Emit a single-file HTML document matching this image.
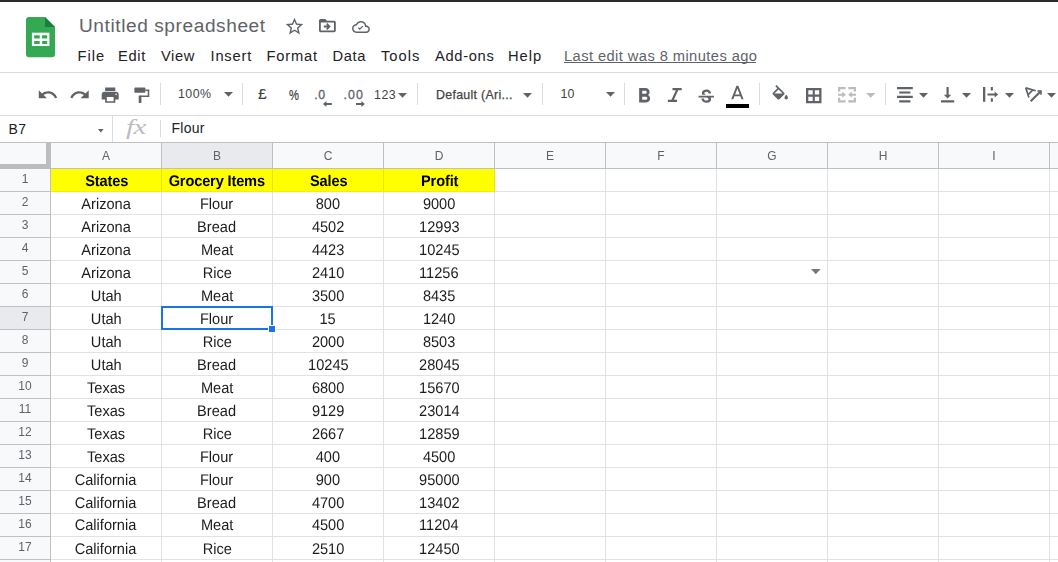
<!DOCTYPE html>
<html><head><meta charset="utf-8"><style>
*{box-sizing:border-box;margin:0;padding:0}
html,body{width:1058px;height:562px;overflow:hidden;background:#fff;font-family:"Liberation Sans",sans-serif;}
#root{position:relative;width:1058px;height:562px;overflow:hidden;background:#fff}
.abs,#root div,#root span{position:absolute}
.title{left:79px;top:15px;font-size:18px;letter-spacing:.55px;transform:scaleX(1.06);transform-origin:0 0;color:#5f6368;white-space:nowrap;line-height:22px}
.menu{top:47px;font-size:14.7px;color:#202124;white-space:nowrap;line-height:18px}
.hl{height:1px;background:#dadce0;left:0;width:1058px}
.sep{width:1px;background:#dadce0;top:83px;height:22px}
.tbt{top:87px;font-size:12.400px;color:#444;white-space:nowrap;line-height:16px}
.arr{width:0;height:0;border-left:4.700px solid transparent;border-right:4.700px solid transparent;border-top:4.800px solid #5f6368;top:92.900px}
svg{position:absolute;overflow:visible}
.ch{top:143px;height:25px;background:#f8f9fa;font-size:12px;color:#5f6368;text-align:center;line-height:26px}
.rh{left:0;width:50px;height:22px;background:#f8f9fa;font-size:12px;color:#5f6368;text-align:center;line-height:21px}
.cell{height:22px;font-size:14.6px;color:#1c1c1c;text-align:center;line-height:25px;white-space:nowrap}
.tx{position:static !important;display:inline-block;text-rendering:geometricPrecision;font-size:15.4px;transform:scaleX(0.948);transform-origin:50% 50%}
.hd{background:#ffff00;font-weight:bold;color:#000}
.hd .tx{letter-spacing:-.15px;margin-left:.5px}
.vl{width:1px;background:#e2e2e2}
.gl{height:1px;background:#e2e2e2}
</style></head><body><div id="root">
<div style="left:0;top:0;width:1058px;height:2px;background:#2a2b2e"></div>
<svg style="left:25.700px;top:16.500px" width="29" height="40" viewBox="0 0 29 40">
<path d="M3.200 0H19L29 10V37a3.200 3.200 0 0 1-3.200 3.200H3.200a3.200 3.200 0 0 1-3.200-3.200V3.200a3.200 3.200 0 0 1 3.200-3.200z" fill="#34a853"/>
<path d="M19 0L29 10H19z" fill="#188038"/>
<path d="M5.900 15.700H23.400V29H5.900z" fill="#fff"/>
<path d="M8.200 18.200H13.700V21.400H8.200zM16.100 18.200H21.200V21.400H16.100zM8.200 23.900H13.700V26.900H8.200zM16.100 23.900H21.200V26.900H16.100z" fill="#34a853"/>
</svg>
<div class="title">Untitled spreadsheet</div>
<svg style="left:283.600px;top:15.500px" width="21" height="21" viewBox="0 0 24 24"><path fill="#5f6368" d="M22 9.240l-7.190-.620L12 2 9.190 8.630 2 9.240l5.460 4.730L5.820 21 12 17.270 18.180 21l-1.630-7.030L22 9.240zM12 15.400l-3.760 2.270 1-4.280-3.320-2.880 4.380-.380L12 6.100l1.710 4.040 4.380.380-3.320 2.880 1 4.280L12 15.400z"/></svg>
<svg style="left:319px;top:19px" width="17" height="14" viewBox="0 0 17 14"><path fill="#5f6368" d="M1.600 0H6.300L8 1.700H15.200A1.600 1.600 0 0 1 16.800 3.300V11.600A1.600 1.600 0 0 1 15.200 13.200H1.600A1.600 1.600 0 0 1 0 11.600V1.600A1.600 1.600 0 0 1 1.600 0zM1.800 3.600V11.400H15V3.600z"/><path fill="#5f6368" d="M4.800 6.600H8.400L7.100 5.300 8.300 4.100 11.700 7.500 8.300 10.900 7.100 9.700 8.400 8.400H4.800z"/></svg>
<svg style="left:351.700px;top:17.700px" width="17.900" height="17.900" viewBox="0 0 24 24"><path fill="#5f6368" d="M19.350 10.040C18.670 6.590 15.640 4 12 4 9.110 4 6.600 5.640 5.350 8.040 2.340 8.360 0 10.910 0 14c0 3.310 2.690 6 6 6h13c2.760 0 5-2.240 5-5 0-2.640-2.050-4.780-4.650-4.960zM19 18H6c-2.210 0-4-1.790-4-4s1.790-4 4-4h.710C7.370 7.690 9.480 6 12 6c3.040 0 5.500 2.460 5.500 5.500v.500H19c1.660 0 3 1.340 3 3s-1.340 3-3 3z"/><path fill="#5f6368" transform="translate(11.400 13.200) scale(.78) translate(-11.250 -13.300)" d="M10 14.180l-2.090-2.090L6.500 13.500 10 17l6.010-6.010-1.410-1.410z"/></svg>
<div class="menu" style="left:77.5px;letter-spacing:1.0px">File</div>
<div class="menu" style="left:118px;letter-spacing:0.67px">Edit</div>
<div class="menu" style="left:161px;letter-spacing:0.57px">View</div>
<div class="menu" style="left:210.5px;letter-spacing:0.8px">Insert</div>
<div class="menu" style="left:266.5px;letter-spacing:0.8px">Format</div>
<div class="menu" style="left:332.5px;letter-spacing:0.67px">Data</div>
<div class="menu" style="left:381px;letter-spacing:1.0px">Tools</div>
<div class="menu" style="left:435px;letter-spacing:0.67px">Add-ons</div>
<div class="menu" style="left:508px;letter-spacing:1.0px">Help</div>
<div class="menu" style="left:564px;color:#5f6368;letter-spacing:.42px">Last edit was 8 minutes ago</div>
<div style="left:564px;top:61.500px;width:192px;height:1px;background:#5f6368"></div>
<div class="hl" style="top:72px"></div>
<svg style="left:36.8px;top:83.9px" width="21.5" height="21.5" viewBox="0 0 24 24"><path fill="#5f6368" d="M12.500 8c-2.650 0-5.050.990-6.900 2.600L2 7v9h9l-3.620-3.620c1.390-1.160 3.160-1.880 5.120-1.880 3.540 0 6.550 2.310 7.600 5.500l2.370-.780C21.080 11.030 17.150 8 12.500 8z"/></svg>
<svg style="left:68.7px;top:83.9px" width="21.5" height="21.5" viewBox="0 0 24 24"><path fill="#5f6368" d="M18.400 10.600C16.550 8.990 14.150 8 11.500 8c-4.650 0-8.580 3.030-9.960 7.220L3.900 16c1.050-3.190 4.050-5.500 7.600-5.500 1.950 0 3.730.720 5.120 1.880L13 16h9V7l-3.600 3.600z"/></svg>
<svg style="left:99.6px;top:85.2px" width="20.4" height="20.4" viewBox="0 0 24 24"><path fill="#5f6368" d="M19 8H5c-1.660 0-3 1.340-3 3v6h4v4h12v-4h4v-6c0-1.660-1.340-3-3-3zm-3 11H8v-5h8v5zm3-7c-.550 0-1-.450-1-1s.450-1 1-1 1 .450 1 1-.450 1-1 1zm-1-9H6v4h12V3z"/></svg>
<svg style="left:133.500px;top:86.500px" width="16" height="17" viewBox="0 0 16 17"><rect x=".4" y=".5" width="11" height="5.300" rx=".9" fill="#5f6368"/><path d="M11.400 3.200H14.500V9.300H6.200" fill="none" stroke="#5f6368" stroke-width="1.600"/><rect x="4.700" y="8.500" width="2.700" height="7.600" rx=".6" fill="#5f6368"/></svg>
<div class="sep" style="left:160px"></div>
<div class="tbt" style="left:178px;top:86px;letter-spacing:.45px">100%</div>
<svg style="left:223.65px;top:92.10px" width="9" height="4.7" viewBox="0 0 9 4.7"><path fill="#5f6368" d="M0 0H9L4.5 4.7z"/></svg>
<div class="sep" style="left:242px"></div>
<div class="tbt" style="left:258.300px;font-size:14.500px;top:86px;color:#3c4043;-webkit-text-stroke:.12px #3c4043;transform:scaleX(1.08);transform-origin:0 0">£</div>
<div class="tbt" style="left:289.300px;font-size:14px;top:86.500px;color:#3c4043;-webkit-text-stroke:.2px #3c4043;transform:scaleX(.8);transform-origin:0 0">%</div>
<div class="tbt" style="left:314.300px;color:#5f6368;-webkit-text-stroke:.3px #5f6368;letter-spacing:.5px">.0</div>
<div class="tbt" style="left:343.600px;color:#5f6368;-webkit-text-stroke:.3px #5f6368;letter-spacing:1px">.00</div>
<svg style="left:323.300px;top:100.700px" width="9" height="6" viewBox="0 0 9 6"><path fill="#5f6368" d="M0 3L3.400 0V2.100H8.800V3.900H3.400V6z"/></svg>
<svg style="left:355.600px;top:100.700px" width="9" height="6" viewBox="0 0 9 6"><path fill="#5f6368" d="M8.800 3L5.400 0V2.100H0V3.900H5.400V6z"/></svg>
<div class="tbt" style="left:374px;letter-spacing:.5px">123</div>
<svg style="left:397.70px;top:93.20px" width="9" height="4.7" viewBox="0 0 9 4.7"><path fill="#5f6368" d="M0 0H9L4.5 4.7z"/></svg>
<div class="sep" style="left:417px"></div>
<div class="tbt" style="left:436px;letter-spacing:.3px;-webkit-text-stroke:.25px #444">Default (Ari...</div>
<svg style="left:523.30px;top:93.20px" width="9" height="4.7" viewBox="0 0 9 4.7"><path fill="#5f6368" d="M0 0H9L4.5 4.7z"/></svg>
<div class="sep" style="left:542px"></div>
<div class="tbt" style="left:560.400px;top:86px;letter-spacing:.3px">10</div>
<svg style="left:605.75px;top:92.30px" width="9" height="4.7" viewBox="0 0 9 4.7"><path fill="#5f6368" d="M0 0H9L4.5 4.7z"/></svg>
<div class="sep" style="left:624px"></div>
<svg style="left:631.800px;top:83.800px" width="24.500" height="24.500" viewBox="0 0 24 24"><path fill="#5f6368" d="M15.600 10.790c.970-.670 1.650-1.770 1.650-2.790 0-2.260-1.750-4-4-4H7v14h7.040c2.090 0 3.710-1.700 3.710-3.790 0-1.520-.860-2.820-2.150-3.420zM10 6.500h3c.830 0 1.500.670 1.500 1.500s-.670 1.500-1.500 1.500h-3v-3zm3.500 9H10v-3h3.500c.830 0 1.500.670 1.500 1.500s-.670 1.500-1.500 1.500z"/></svg>
<svg style="left:661.100px;top:83.900px" width="27.600" height="24" viewBox="0 0 24 24" preserveAspectRatio="none"><path fill="#5f6368" d="M10 4v2.300h2.900l-3.800 9.400H6v2.300h8v-2.300h-2.800l3.800-9.400H18V4z"/></svg>
<svg style="left:695.850px;top:86.700px" width="20.500" height="20.900" viewBox="0 0 24 24" preserveAspectRatio="none"><path fill="#5f6368" d="M6.850 7.080C6.850 4.370 9.450 3 12.240 3c1.640 0 3 .490 3.900 1.280.770.650 1.460 1.730 1.460 3.240h-3.010c0-.310-.050-.590-.150-.850-.290-.860-1.200-1.280-2.250-1.280-1.860 0-2.340 1.020-2.340 1.700 0 .480.250.880.740 1.210.380.250.770.480 1.410.700H7.390c-.210-.340-.540-.890-.540-1.920zM21 12v-2H3v2h9.620c1.150.450 1.960.750 1.960 1.970 0 1-.810 1.670-2.280 1.670-1.540 0-2.930-.540-2.930-2.510H6.400c0 .550.080 1.130.240 1.580.810 2.290 3.290 3.300 5.670 3.300 2.270 0 5.300-.890 5.300-4.050 0-.300-.010-1.160-.480-1.940H21V12z"/></svg>
<svg style="left:725.700px;top:82.850px" width="22.800" height="22.800" viewBox="0 0 24 24"><path fill="#5f6368" d="M11 3L5.500 17h2.250l1.120-3h6.250l1.120 3h2.250L13 3h-2zm-1.380 9L12 5.670 14.380 12H9.620z"/></svg>
<div style="left:725.800px;top:104.100px;width:23.300px;height:3.800px;background:#000"></div>
<div class="sep" style="left:759px"></div>
<svg style="left:769.600px;top:85.300px" width="20.500" height="20.500" viewBox="0 0 24 24"><path fill="#5f6368" d="M16.560 8.940L7.620 0 6.210 1.410l2.380 2.380-5.150 5.150c-.590.590-.590 1.540 0 2.120l5.500 5.500c.290.290.680.440 1.060.440s.770-.150 1.060-.440l5.500-5.500c.590-.580.590-1.530 0-2.120zM5.210 10L10 5.210 14.790 10H5.210zM19 11.500s-2 2.170-2 3.500c0 1.100.900 2 2 2s2-.900 2-2c0-1.330-2-3.500-2-3.500z"/></svg>
<svg style="left:805.600px;top:87.500px" width="15.500" height="15.200" viewBox="0 0 15.500 15.200"><path fill="#5f6368" fill-rule="evenodd" d="M0 0H15.500V15.200H0zM2.300 2.300V6.500H6.700V2.300zM8.800 2.300V6.500H13.200V2.300zM2.300 8.700V12.900H6.700V8.700zM8.800 8.700V12.900H13.200V8.700z"/></svg>
<svg style="left:838.100px;top:87.400px" width="18" height="15.400" viewBox="0 0 18 15.400"><path fill="#bcbcbc" d="M0 0H7.600V2.200H2.200V4.600H0zM10.300 0H18V4.600H15.800V2.200H10.300zM0 10.800H2.200V13.200H7.600V15.400H0zM15.800 10.800H18V15.400H10.300V13.200H15.800zM0 6.700H4.200V4.600L7.800 7.700 4.200 10.800V8.700H0zM18 6.700H13.800V4.600L10.200 7.700 13.800 10.800V8.700H18z"/></svg>
<svg style="left:866.15px;top:93.30px" width="9.4" height="4.8" viewBox="0 0 9.4 4.8"><path fill="#bcbcbc" d="M0 0H9.4L4.7 4.8z"/></svg>
<div class="sep" style="left:885px"></div>
<svg style="left:896.900px;top:86.600px" width="16" height="16" viewBox="0 0 16 16"><path fill="#5f6368" d="M0 0H15.800V2.300H0zM2.200 4.400H13.400V6.600H2.200zM0 8.700H15.800V11H0zM2.200 13.200H13.400V15.400H2.200z"/></svg>
<svg style="left:918.75px;top:93.30px" width="9" height="4.7" viewBox="0 0 9 4.7"><path fill="#5f6368" d="M0 0H9L4.5 4.7z"/></svg>
<svg style="left:941.200px;top:86.800px" width="13.200" height="15.400" viewBox="0 0 13.200 15.400"><path fill="#5f6368" d="M5.500 0H7.700V7.800H10.300L6.600 11.400 2.900 7.800H5.500zM0 13.200H13.200V15.400H0z"/></svg>
<svg style="left:961.55px;top:93.30px" width="9" height="4.7" viewBox="0 0 9 4.7"><path fill="#5f6368" d="M0 0H9L4.5 4.7z"/></svg>
<svg style="left:983.100px;top:87.200px" width="15.200" height="14.800" viewBox="0 0 15.200 14.800"><path fill="#5f6368" d="M0 0H2.300V14.800H0zM7.800 0H9.900V3.500H7.800zM7.800 11.200H9.900V14.800H7.800zM4.500 6.500H11.700V4.500L15.200 7.500 11.700 10.500V8.500H4.500z"/></svg>
<svg style="left:1004.50px;top:93.30px" width="9" height="4.7" viewBox="0 0 9 4.7"><path fill="#5f6368" d="M0 0H9L4.5 4.7z"/></svg>
<svg style="left:1024px;top:86px" width="19" height="17" viewBox="0 0 19 17"><g fill="none" stroke="#5f6368" stroke-width="1.700" stroke-linejoin="bevel"><path d="M11.700 4.800L1.800 1.900L4.900 11.400M3.900 8.900L8.900 3.900"/><path d="M6.700 15.300L16.500 5.500" stroke-width="2.100"/><path d="M13.400 5H17V8.700" stroke-width="1.600" stroke-linejoin="miter"/></g></svg>
<svg style="left:1047.30px;top:93.30px" width="9" height="4.7" viewBox="0 0 9 4.7"><path fill="#5f6368" d="M0 0H9L4.5 4.7z"/></svg>
<div class="hl" style="top:115px"></div>
<div style="left:8.600px;top:120px;font-size:14px;color:#202124;line-height:18px;letter-spacing:.3px">B7</div>
<svg style="left:98.35px;top:129.00px" width="5.6" height="3.4" viewBox="0 0 5.6 3.4"><path fill="#5f6368" d="M0 0H5.6L2.8 3.4z"/></svg>
<div style="left:112px;top:116px;width:1px;height:26px;background:#dadce0"></div>
<div style="left:126px;top:115px;font-family:'Liberation Serif',serif;font-style:italic;font-size:22px;color:#bdbdbd;line-height:24px;transform:scaleX(1.32);transform-origin:0 0;letter-spacing:-.5px">fx</div>
<div style="left:160px;top:120px;width:1px;height:17px;background:#dadce0"></div>
<div style="left:171.600px;top:119px;font-size:14px;color:#202124;line-height:18px;letter-spacing:.2px">Flour</div>
<div style="left:0;top:142px;width:1058px;height:1px;background:#c0c0c0"></div>
<div style="left:0;top:143px;width:1058px;height:25px;background:#f8f9fa"></div>
<div style="left:162px;top:143px;width:110px;height:25px;background:#e8eaed"></div>
<div style="left:161px;top:143px;width:1px;height:25px;background:#c0c0c0"></div>
<div style="left:272px;top:143px;width:1px;height:25px;background:#c0c0c0"></div>
<div style="left:383px;top:143px;width:1px;height:25px;background:#c0c0c0"></div>
<div style="left:494px;top:143px;width:1px;height:25px;background:#c0c0c0"></div>
<div style="left:605px;top:143px;width:1px;height:25px;background:#c0c0c0"></div>
<div style="left:716px;top:143px;width:1px;height:25px;background:#c0c0c0"></div>
<div style="left:827px;top:143px;width:1px;height:25px;background:#c0c0c0"></div>
<div style="left:938px;top:143px;width:1px;height:25px;background:#c0c0c0"></div>
<div style="left:1049px;top:143px;width:1px;height:25px;background:#c0c0c0"></div>
<div style="left:1160px;top:143px;width:1px;height:25px;background:#c0c0c0"></div>
<div style="left:46px;top:143px;width:5px;height:26px;background:#bdbdbd"></div>
<div style="left:0;top:164px;width:51px;height:5px;background:#bdbdbd"></div>
<div style="left:51px;top:168px;width:1007px;height:1px;background:#c0c0c0"></div>
<div style="left:0;top:169px;width:50px;height:393px;background:#f8f9fa"></div>
<div style="left:0;top:307px;width:50px;height:22px;background:#e8eaed"></div>
<div style="left:0;top:191px;width:50px;height:1px;background:#c0c0c0"></div>
<div class="gl" style="left:51px;top:191px;width:1007px"></div>
<div style="left:0;top:214px;width:50px;height:1px;background:#c0c0c0"></div>
<div class="gl" style="left:51px;top:214px;width:1007px"></div>
<div style="left:0;top:237px;width:50px;height:1px;background:#c0c0c0"></div>
<div class="gl" style="left:51px;top:237px;width:1007px"></div>
<div style="left:0;top:260px;width:50px;height:1px;background:#c0c0c0"></div>
<div class="gl" style="left:51px;top:260px;width:1007px"></div>
<div style="left:0;top:283px;width:50px;height:1px;background:#c0c0c0"></div>
<div class="gl" style="left:51px;top:283px;width:1007px"></div>
<div style="left:0;top:306px;width:50px;height:1px;background:#c0c0c0"></div>
<div class="gl" style="left:51px;top:306px;width:1007px"></div>
<div style="left:0;top:329px;width:50px;height:1px;background:#c0c0c0"></div>
<div class="gl" style="left:51px;top:329px;width:1007px"></div>
<div style="left:0;top:352px;width:50px;height:1px;background:#c0c0c0"></div>
<div class="gl" style="left:51px;top:352px;width:1007px"></div>
<div style="left:0;top:375px;width:50px;height:1px;background:#c0c0c0"></div>
<div class="gl" style="left:51px;top:375px;width:1007px"></div>
<div style="left:0;top:398px;width:50px;height:1px;background:#c0c0c0"></div>
<div class="gl" style="left:51px;top:398px;width:1007px"></div>
<div style="left:0;top:421px;width:50px;height:1px;background:#c0c0c0"></div>
<div class="gl" style="left:51px;top:421px;width:1007px"></div>
<div style="left:0;top:444px;width:50px;height:1px;background:#c0c0c0"></div>
<div class="gl" style="left:51px;top:444px;width:1007px"></div>
<div style="left:0;top:467px;width:50px;height:1px;background:#c0c0c0"></div>
<div class="gl" style="left:51px;top:467px;width:1007px"></div>
<div style="left:0;top:490px;width:50px;height:1px;background:#c0c0c0"></div>
<div class="gl" style="left:51px;top:490px;width:1007px"></div>
<div style="left:0;top:513px;width:50px;height:1px;background:#c0c0c0"></div>
<div class="gl" style="left:51px;top:513px;width:1007px"></div>
<div style="left:0;top:536px;width:50px;height:1px;background:#c0c0c0"></div>
<div class="gl" style="left:51px;top:536px;width:1007px"></div>
<div style="left:0;top:559px;width:50px;height:1px;background:#c0c0c0"></div>
<div class="gl" style="left:51px;top:559px;width:1007px"></div>
<div style="left:0;top:582px;width:50px;height:1px;background:#c0c0c0"></div>
<div class="gl" style="left:51px;top:582px;width:1007px"></div>
<div style="left:50px;top:169px;width:1px;height:393px;background:#c0c0c0"></div>
<div class="vl" style="left:161px;top:169px;height:393px"></div>
<div class="vl" style="left:272px;top:169px;height:393px"></div>
<div class="vl" style="left:383px;top:169px;height:393px"></div>
<div class="vl" style="left:494px;top:169px;height:393px"></div>
<div class="vl" style="left:605px;top:169px;height:393px"></div>
<div class="vl" style="left:716px;top:169px;height:393px"></div>
<div class="vl" style="left:827px;top:169px;height:393px"></div>
<div class="vl" style="left:938px;top:169px;height:393px"></div>
<div class="vl" style="left:1049px;top:169px;height:393px"></div>
<div class="vl" style="left:1160px;top:169px;height:393px"></div>
<div style="left:51px;top:169px;width:444px;height:23px;background:#ffff00"></div>
<div style="left:161px;top:169px;width:1px;height:23px;background:#e6e600"></div>
<div style="left:272px;top:169px;width:1px;height:23px;background:#e6e600"></div>
<div style="left:383px;top:169px;width:1px;height:23px;background:#e6e600"></div>
<div style="left:494px;top:169px;width:1px;height:23px;background:#e6e600"></div>
<div style="left:51px;top:191px;width:444px;height:1px;background:#f0f000"></div>
<div style="left:0;top:0;width:1058px;height:562px;will-change:transform">
<div class="ch" style="left:51px;width:110px;background:none">A</div>
<div class="ch" style="left:162px;width:110px;background:none">B</div>
<div class="ch" style="left:273px;width:110px;background:none">C</div>
<div class="ch" style="left:384px;width:110px;background:none">D</div>
<div class="ch" style="left:495px;width:110px;background:none">E</div>
<div class="ch" style="left:606px;width:110px;background:none">F</div>
<div class="ch" style="left:717px;width:110px;background:none">G</div>
<div class="ch" style="left:828px;width:110px;background:none">H</div>
<div class="ch" style="left:939px;width:110px;background:none">I</div>
<div class="ch" style="left:1050px;width:110px;background:none">J</div>
<div class="rh" style="top:169px;background:none">1</div>
<div class="rh" style="top:192px;background:none">2</div>
<div class="rh" style="top:215px;background:none">3</div>
<div class="rh" style="top:238px;background:none">4</div>
<div class="rh" style="top:261px;background:none">5</div>
<div class="rh" style="top:284px;background:none">6</div>
<div class="rh" style="top:307px;background:none">7</div>
<div class="rh" style="top:330px;background:none">8</div>
<div class="rh" style="top:353px;background:none">9</div>
<div class="rh" style="top:376px;background:none">10</div>
<div class="rh" style="top:399px;background:none">11</div>
<div class="rh" style="top:422px;background:none">12</div>
<div class="rh" style="top:445px;background:none">13</div>
<div class="rh" style="top:468px;background:none">14</div>
<div class="rh" style="top:491px;background:none">15</div>
<div class="rh" style="top:514px;background:none">16</div>
<div class="rh" style="top:537px;background:none">17</div>
<div class="rh" style="top:560px;background:none">18</div>
<div class="cell hd" style="left:51px;top:169px;width:110px;background:none"><span class="tx">States</span></div>
<div class="cell hd" style="left:162px;top:169px;width:110px;background:none"><span class="tx">Grocery Items</span></div>
<div class="cell hd" style="left:273px;top:169px;width:110px;background:none"><span class="tx">Sales</span></div>
<div class="cell hd" style="left:384px;top:169px;width:110px;background:none"><span class="tx">Profit</span></div>
<div class="cell" style="left:51px;top:192px;width:110px;background:none"><span class="tx">Arizona</span></div>
<div class="cell" style="left:162px;top:192px;width:110px;background:none"><span class="tx">Flour</span></div>
<div class="cell" style="left:273px;top:192px;width:110px;background:none"><span class="tx">800</span></div>
<div class="cell" style="left:384px;top:192px;width:110px;background:none"><span class="tx">9000</span></div>
<div class="cell" style="left:51px;top:215px;width:110px;background:none"><span class="tx">Arizona</span></div>
<div class="cell" style="left:162px;top:215px;width:110px;background:none"><span class="tx">Bread</span></div>
<div class="cell" style="left:273px;top:215px;width:110px;background:none"><span class="tx">4502</span></div>
<div class="cell" style="left:384px;top:215px;width:110px;background:none"><span class="tx">12993</span></div>
<div class="cell" style="left:51px;top:238px;width:110px;background:none"><span class="tx">Arizona</span></div>
<div class="cell" style="left:162px;top:238px;width:110px;background:none"><span class="tx">Meat</span></div>
<div class="cell" style="left:273px;top:238px;width:110px;background:none"><span class="tx">4423</span></div>
<div class="cell" style="left:384px;top:238px;width:110px;background:none"><span class="tx">10245</span></div>
<div class="cell" style="left:51px;top:261px;width:110px;background:none"><span class="tx">Arizona</span></div>
<div class="cell" style="left:162px;top:261px;width:110px;background:none"><span class="tx">Rice</span></div>
<div class="cell" style="left:273px;top:261px;width:110px;background:none"><span class="tx">2410</span></div>
<div class="cell" style="left:384px;top:261px;width:110px;background:none"><span class="tx">11256</span></div>
<div class="cell" style="left:51px;top:284px;width:110px;background:none"><span class="tx">Utah</span></div>
<div class="cell" style="left:162px;top:284px;width:110px;background:none"><span class="tx">Meat</span></div>
<div class="cell" style="left:273px;top:284px;width:110px;background:none"><span class="tx">3500</span></div>
<div class="cell" style="left:384px;top:284px;width:110px;background:none"><span class="tx">8435</span></div>
<div class="cell" style="left:51px;top:307px;width:110px;background:none"><span class="tx">Utah</span></div>
<div class="cell" style="left:162px;top:307px;width:110px;background:none"><span class="tx">Flour</span></div>
<div class="cell" style="left:273px;top:307px;width:110px;background:none"><span class="tx">15</span></div>
<div class="cell" style="left:384px;top:307px;width:110px;background:none"><span class="tx">1240</span></div>
<div class="cell" style="left:51px;top:330px;width:110px;background:none"><span class="tx">Utah</span></div>
<div class="cell" style="left:162px;top:330px;width:110px;background:none"><span class="tx">Rice</span></div>
<div class="cell" style="left:273px;top:330px;width:110px;background:none"><span class="tx">2000</span></div>
<div class="cell" style="left:384px;top:330px;width:110px;background:none"><span class="tx">8503</span></div>
<div class="cell" style="left:51px;top:353px;width:110px;background:none"><span class="tx">Utah</span></div>
<div class="cell" style="left:162px;top:353px;width:110px;background:none"><span class="tx">Bread</span></div>
<div class="cell" style="left:273px;top:353px;width:110px;background:none"><span class="tx">10245</span></div>
<div class="cell" style="left:384px;top:353px;width:110px;background:none"><span class="tx">28045</span></div>
<div class="cell" style="left:51px;top:376px;width:110px;background:none"><span class="tx">Texas</span></div>
<div class="cell" style="left:162px;top:376px;width:110px;background:none"><span class="tx">Meat</span></div>
<div class="cell" style="left:273px;top:376px;width:110px;background:none"><span class="tx">6800</span></div>
<div class="cell" style="left:384px;top:376px;width:110px;background:none"><span class="tx">15670</span></div>
<div class="cell" style="left:51px;top:399px;width:110px;background:none"><span class="tx">Texas</span></div>
<div class="cell" style="left:162px;top:399px;width:110px;background:none"><span class="tx">Bread</span></div>
<div class="cell" style="left:273px;top:399px;width:110px;background:none"><span class="tx">9129</span></div>
<div class="cell" style="left:384px;top:399px;width:110px;background:none"><span class="tx">23014</span></div>
<div class="cell" style="left:51px;top:422px;width:110px;background:none"><span class="tx">Texas</span></div>
<div class="cell" style="left:162px;top:422px;width:110px;background:none"><span class="tx">Rice</span></div>
<div class="cell" style="left:273px;top:422px;width:110px;background:none"><span class="tx">2667</span></div>
<div class="cell" style="left:384px;top:422px;width:110px;background:none"><span class="tx">12859</span></div>
<div class="cell" style="left:51px;top:445px;width:110px;background:none"><span class="tx">Texas</span></div>
<div class="cell" style="left:162px;top:445px;width:110px;background:none"><span class="tx">Flour</span></div>
<div class="cell" style="left:273px;top:445px;width:110px;background:none"><span class="tx">400</span></div>
<div class="cell" style="left:384px;top:445px;width:110px;background:none"><span class="tx">4500</span></div>
<div class="cell" style="left:51px;top:468px;width:110px;background:none"><span class="tx">California</span></div>
<div class="cell" style="left:162px;top:468px;width:110px;background:none"><span class="tx">Flour</span></div>
<div class="cell" style="left:273px;top:468px;width:110px;background:none"><span class="tx">900</span></div>
<div class="cell" style="left:384px;top:468px;width:110px;background:none"><span class="tx">95000</span></div>
<div class="cell" style="left:51px;top:491px;width:110px;background:none"><span class="tx">California</span></div>
<div class="cell" style="left:162px;top:491px;width:110px;background:none"><span class="tx">Bread</span></div>
<div class="cell" style="left:273px;top:491px;width:110px;background:none"><span class="tx">4700</span></div>
<div class="cell" style="left:384px;top:491px;width:110px;background:none"><span class="tx">13402</span></div>
<div class="cell" style="left:51px;top:513px;width:110px;background:none"><span class="tx">California</span></div>
<div class="cell" style="left:162px;top:513px;width:110px;background:none"><span class="tx">Meat</span></div>
<div class="cell" style="left:273px;top:513px;width:110px;background:none"><span class="tx">4500</span></div>
<div class="cell" style="left:384px;top:513px;width:110px;background:none"><span class="tx">11204</span></div>
<div class="cell" style="left:51px;top:537px;width:110px;background:none"><span class="tx">California</span></div>
<div class="cell" style="left:162px;top:537px;width:110px;background:none"><span class="tx">Rice</span></div>
<div class="cell" style="left:273px;top:537px;width:110px;background:none"><span class="tx">2510</span></div>
<div class="cell" style="left:384px;top:537px;width:110px;background:none"><span class="tx">12450</span></div>
</div>
<div style="left:161px;top:306px;width:112px;height:24px;border:2px solid #1a73e8"></div>
<div style="left:268px;top:325px;width:8px;height:8px;background:#1a73e8;border:1px solid #fff"></div>
<svg style="left:810.75px;top:269.00px" width="9.6" height="5.2" viewBox="0 0 9.6 5.2"><path fill="#777" d="M0 0H9.6L4.8 5.2z"/></svg>
</div></body></html>
